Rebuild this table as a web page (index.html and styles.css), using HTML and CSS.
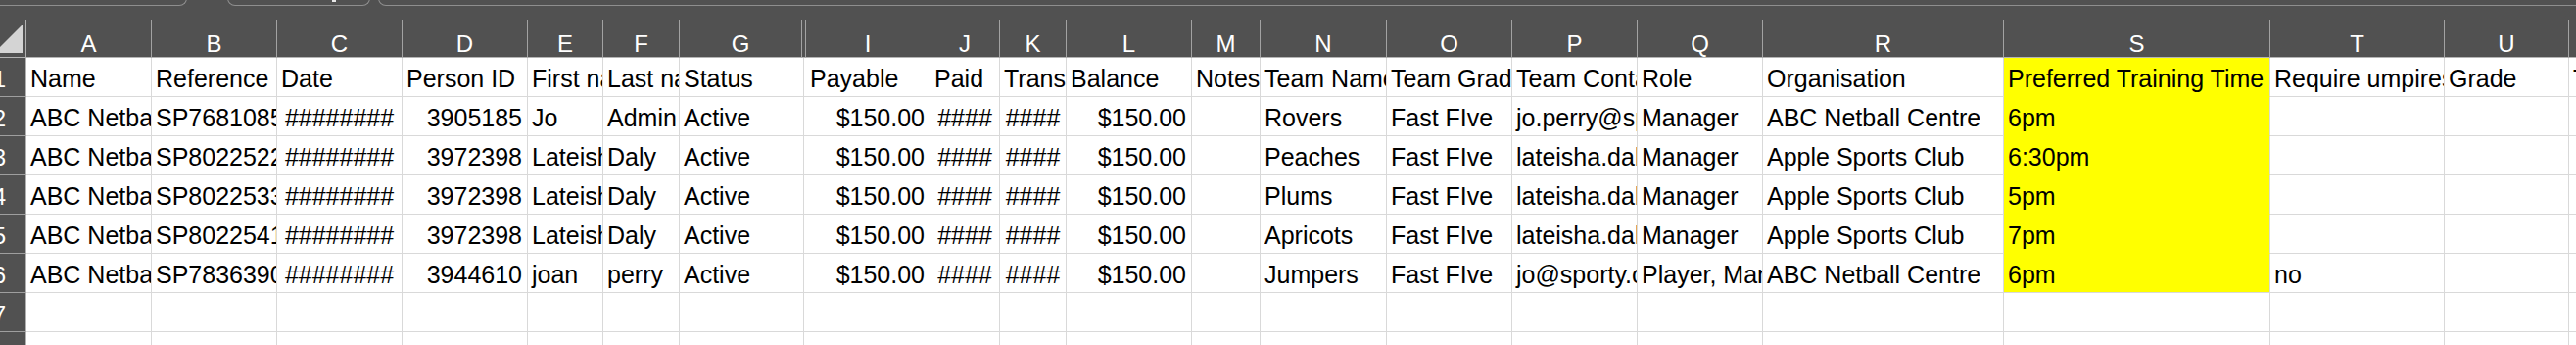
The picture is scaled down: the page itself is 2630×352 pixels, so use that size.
FILE: index.html
```html
<!DOCTYPE html>
<html lang="en">
<head>
<meta charset="utf-8">
<title>Sheet</title>
<link rel="stylesheet" href="styles.css">
</head>
<body>
<div class="app">
  <div class="tabbar">
    <div class="tab tab-first"></div>
    <div class="tab tab-mid"><span class="caret"></span></div>
    <div class="tab tab-last"></div>
  </div>
  <div class="sheet">
    <!-- column headers -->
    <div class="corner"><svg width="27" height="38" viewBox="0 0 27 38"><polygon points="23,5 23,34 -6,34" fill="#d4d4d4"/></svg></div>
    <div class="ch">A</div><div class="ch">B</div><div class="ch">C</div><div class="ch">D</div><div class="ch">E</div><div class="ch">F</div><div class="ch">G</div><div class="ch hid"></div><div class="ch">I</div><div class="ch">J</div><div class="ch">K</div><div class="ch">L</div><div class="ch">M</div><div class="ch">N</div><div class="ch">O</div><div class="ch">P</div><div class="ch">Q</div><div class="ch">R</div><div class="ch">S</div><div class="ch">T</div><div class="ch">U</div><div class="ch">V</div>

    <!-- row 1 -->
    <div class="rh">1</div>
    <div class="c">Name</div><div class="c">Reference</div><div class="c">Date</div><div class="c">Person ID</div><div class="c">First name</div><div class="c">Last name</div><div class="c gx">Status</div><div class="hx"></div><div class="c">Payable</div><div class="c">Paid</div><div class="c">Transaction</div><div class="c">Balance</div><div class="c">Notes</div><div class="c">Team Name</div><div class="c">Team Grade</div><div class="c">Team Contact</div><div class="c">Role</div><div class="c">Organisation</div><div class="c hl">Preferred Training Time</div><div class="c">Require umpires</div><div class="c">Grade</div><div class="c">Team Manager</div>

    <!-- row 2 -->
    <div class="rh">2</div>
    <div class="c">ABC Netball Centre</div><div class="c">SP76810853</div><div class="c m">########</div><div class="c r">3905185</div><div class="c">Jo</div><div class="c">Admin</div><div class="c gx">Active</div><div class="hx"></div><div class="c r">$150.00</div><div class="c m">####</div><div class="c m">####</div><div class="c r">$150.00</div><div class="c"></div><div class="c">Rovers</div><div class="c">Fast FIve</div><div class="c">jo.perry@sporty.co</div><div class="c">Manager</div><div class="c">ABC Netball Centre</div><div class="c hl">6pm</div><div class="c"></div><div class="c"></div><div class="c"></div>

    <!-- row 3 -->
    <div class="rh">3</div>
    <div class="c">ABC Netball Centre</div><div class="c">SP80225223</div><div class="c m">########</div><div class="c r">3972398</div><div class="c">Lateisha</div><div class="c">Daly</div><div class="c gx">Active</div><div class="hx"></div><div class="c r">$150.00</div><div class="c m">####</div><div class="c m">####</div><div class="c r">$150.00</div><div class="c"></div><div class="c">Peaches</div><div class="c">Fast FIve</div><div class="c">lateisha.daly@apple</div><div class="c">Manager</div><div class="c">Apple Sports Club</div><div class="c hl">6:30pm</div><div class="c"></div><div class="c"></div><div class="c"></div>

    <!-- row 4 -->
    <div class="rh">4</div>
    <div class="c">ABC Netball Centre</div><div class="c">SP80225331</div><div class="c m">########</div><div class="c r">3972398</div><div class="c">Lateisha</div><div class="c">Daly</div><div class="c gx">Active</div><div class="hx"></div><div class="c r">$150.00</div><div class="c m">####</div><div class="c m">####</div><div class="c r">$150.00</div><div class="c"></div><div class="c">Plums</div><div class="c">Fast FIve</div><div class="c">lateisha.daly@apple</div><div class="c">Manager</div><div class="c">Apple Sports Club</div><div class="c hl">5pm</div><div class="c"></div><div class="c"></div><div class="c"></div>

    <!-- row 5 -->
    <div class="rh">5</div>
    <div class="c">ABC Netball Centre</div><div class="c">SP80225417</div><div class="c m">########</div><div class="c r">3972398</div><div class="c">Lateisha</div><div class="c">Daly</div><div class="c gx">Active</div><div class="hx"></div><div class="c r">$150.00</div><div class="c m">####</div><div class="c m">####</div><div class="c r">$150.00</div><div class="c"></div><div class="c">Apricots</div><div class="c">Fast FIve</div><div class="c">lateisha.daly@apple</div><div class="c">Manager</div><div class="c">Apple Sports Club</div><div class="c hl">7pm</div><div class="c"></div><div class="c"></div><div class="c"></div>

    <!-- row 6 -->
    <div class="rh">6</div>
    <div class="c">ABC Netball Centre</div><div class="c">SP78363906</div><div class="c m">########</div><div class="c r">3944610</div><div class="c">joan</div><div class="c">perry</div><div class="c gx">Active</div><div class="hx"></div><div class="c r">$150.00</div><div class="c m">####</div><div class="c m">####</div><div class="c r">$150.00</div><div class="c"></div><div class="c">Jumpers</div><div class="c">Fast FIve</div><div class="c">jo@sporty.co</div><div class="c">Player, Manager</div><div class="c">ABC Netball Centre</div><div class="c hl hl-end">6pm</div><div class="c">no</div><div class="c"></div><div class="c"></div>

    <!-- row 7 -->
    <div class="rh">7</div>
    <div class="c"></div><div class="c"></div><div class="c"></div><div class="c"></div><div class="c"></div><div class="c"></div><div class="c gx"></div><div class="hx"></div><div class="c"></div><div class="c"></div><div class="c"></div><div class="c"></div><div class="c"></div><div class="c"></div><div class="c"></div><div class="c"></div><div class="c"></div><div class="c"></div><div class="c"></div><div class="c"></div><div class="c"></div><div class="c"></div>

    <!-- row 8 -->
    <div class="rh">8</div>
    <div class="c"></div><div class="c"></div><div class="c"></div><div class="c"></div><div class="c"></div><div class="c"></div><div class="c gx"></div><div class="hx"></div><div class="c"></div><div class="c"></div><div class="c"></div><div class="c"></div><div class="c"></div><div class="c"></div><div class="c"></div><div class="c"></div><div class="c"></div><div class="c"></div><div class="c"></div><div class="c"></div><div class="c"></div><div class="c"></div>
  </div>
</div>
</body>
</html>
```

FILE: styles.css
```css
html, body {
  margin: 0;
  padding: 0;
  width: 2630px;
  height: 352px;
  overflow: hidden;
  background: #ffffff;
}

.app {
  width: 2630px;
  height: 352px;
  overflow: hidden;
  font-family: "Liberation Sans", Arial, sans-serif;
}

/* top strip with tab outlines */
.tabbar {
  height: 20px;
  background: #515151;
  display: flex;
  align-items: flex-start;
  overflow: hidden;
}

.tab {
  height: 10px;
  margin-top: -4px;
  border: 1px solid #8e8e8e;
  border-top: none;
  border-radius: 0 0 8px 8px;
  box-sizing: border-box;
  flex: none;
}

.tab-first {
  margin-left: -20px;
  width: 211px;
}

.tab-mid {
  margin-left: 41px;
  width: 146px;
  display: flex;
  align-items: flex-start;
  padding-left: 106px;
}

.caret {
  display: block;
  width: 4px;
  height: 2px;
  margin-top: 4px;
  background: #e8e8e8;
}

.tab-last {
  margin-left: 8px;
  width: 2400px;
}

/* grid of cells */
.sheet {
  display: grid;
  grid-template-columns: 27px 128px 128px 128px 128px 77px 78px 125px 4px 127px 71px 68px 128px 70px 129px 128px 128px 128px 246px 272px 178px 127px 100px;
  grid-template-rows: 39px repeat(8, 40px);
}

.corner {
  background: #515151;
  border-right: 1px solid #b0b0b0;
  border-bottom: 1px solid #b4b4b4;
  box-sizing: border-box;
  overflow: hidden;
  display: flex;
}

.corner svg {
  display: block;
  flex: none;
}

.ch {
  background: #515151;
  color: #ffffff;
  border-right: 1px solid #a2a2a2;
  border-bottom: 1px solid #b4b4b4;
  box-shadow: inset 0 1px 0 #515151;
  box-sizing: border-box;
  display: flex;
  justify-content: center;
  align-items: flex-end;
  padding-bottom: 1px;
  font-size: 24px;
  line-height: 24px;
  overflow: hidden;
}

.ch.hid {
  padding: 0;
}

.rh {
  background: #515151;
  color: #ffffff;
  border-right: 1px solid #b0b0b0;
  border-bottom: 1px solid #9e9e9e;
  box-sizing: border-box;
  display: flex;
  justify-content: flex-end;
  align-items: flex-end;
  padding: 0 20px 5px 0;
  font-size: 24px;
  line-height: 25px;
  overflow: hidden;
  white-space: nowrap;
}

.c {
  border-right: 1px solid #d9d9d9;
  border-bottom: 1px solid #d9d9d9;
  box-sizing: border-box;
  display: flex;
  align-items: flex-end;
  padding: 0 5px 5px 4px;
  font-size: 25px;
  line-height: 25px;
  color: #000000;
  white-space: nowrap;
  overflow: hidden;
}

.c.r {
  justify-content: flex-end;
}

.c.m {
  justify-content: center;
  padding-left: 0;
  padding-right: 0;
}

.c.gx {
  border-right: none;
}

.hx {
  border-bottom: 1px solid #d9d9d9;
  box-sizing: border-box;
  background: linear-gradient(to right, transparent 1px, #d9d9d9 1px, #d9d9d9 2px, transparent 2px);
}

.c.hl {
  background: #ffff00;
  border-bottom-color: #ffff00;
}

.c.hl.hl-end {
  border-bottom-color: #d9d9d9;
}
```
